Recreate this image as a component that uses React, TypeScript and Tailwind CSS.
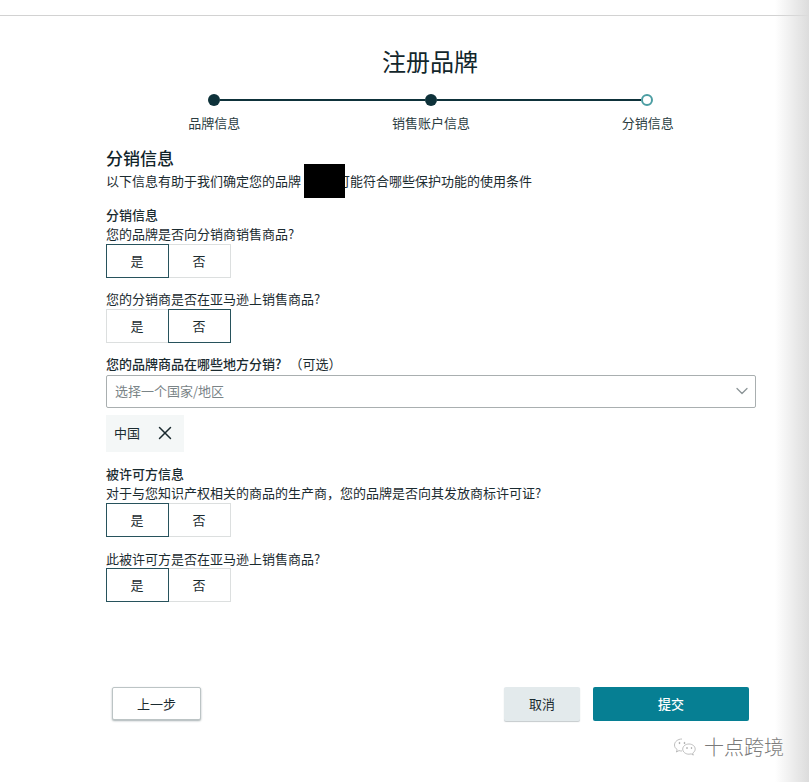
import { ChevronDown, X } from "lucide-react";

const font = { fontFamily: '"Noto Sans CJK SC", "Liberation Sans", sans-serif' };

function Question({ className, bold, children }: { className?: string; bold?: boolean; children: React.ReactNode }) {
  return (
    <p className={`h-[18px] text-[13px] leading-[18px] ${bold ? "font-medium" : ""} ${className ?? ""}`}>{children}</p>
  );
}

function YesNo({ value, className }: { value: "yes" | "no"; className?: string }) {
  const on = "border-[#27525c]";
  const off = "border-[#dcdfdf]";
  return (
    <div className={`flex h-[34px] w-[125px] text-[13px] ${className ?? ""}`}>
      <div className={`flex items-center justify-center border pb-px pr-px ${value === "yes" ? `w-[63px] ${on}` : `w-[62px] border-r-0 ${off}`}`}>是</div>
      <div className={`flex items-center justify-center border pb-px pr-px ${value === "no" ? `w-[63px] ${on}` : `w-[62px] border-l-0 ${off}`}`}>否</div>
    </div>
  );
}

function Stepper() {
  return (
    <div>
      <div className="flex h-3 items-center pl-[102px] pr-[103px]">
        <span className="h-3 w-3 shrink-0 rounded-full bg-[#0e323a]" />
        <span className="h-[2px] flex-1 bg-[#0e323a]" />
        <span className="h-3 w-3 shrink-0 rounded-full bg-[#0e323a]" />
        <span className="h-[2px] flex-1 bg-[#0e323a]" />
        <span className="h-3 w-3 shrink-0 rounded-full border-2 border-[#4c9ea3] bg-white" />
      </div>
      <div className="mt-2 grid grid-cols-3 text-center text-[13px] leading-[18px] text-[#2b3d42]">
        <span>品牌信息</span>
        <span>销售账户信息</span>
        <span>分销信息</span>
      </div>
    </div>
  );
}

function WeChatMark() {
  return (
    <svg viewBox="0 0 24 20" className="h-[20px] w-[24px]" fill="none" stroke="#a3a3a3" strokeWidth="0.7">
      <path d="M9 2C4.8 2 1.5 4.7 1.5 8c0 1.9 1 3.5 2.7 4.6L3.4 15l2.6-1.4c.9.3 1.9.4 3 .4" />
      <path d="M16 7c-3.5 0-6.3 2.3-6.3 5.1s2.8 5.1 6.3 5.1c.8 0 1.5-.1 2.2-.3l2.1 1.2-.6-2c1.5-1 2.5-2.4 2.5-4 0-2.8-2.7-5.1-6.2-5.1z" />
      <circle cx="6.5" cy="6" r=".6" fill="#a3a3a3" />
      <circle cx="11.5" cy="6" r=".6" fill="#a3a3a3" />
      <circle cx="14" cy="11" r=".5" fill="#a3a3a3" />
      <circle cx="18.5" cy="11" r=".5" fill="#a3a3a3" />
    </svg>
  );
}

export default function App() {
  return (
    <div style={font} className="relative h-[782px] w-[809px] overflow-hidden bg-white text-[#1b2b30]">
      {/* top rule */}
      <div className="mt-[15px] h-[1px] bg-[#d2d2d2]" />

      <div className="ml-[106px] w-[650px]">
        <h1 className="mt-[29px] h-8 pr-[2px] text-center text-[24px] leading-8 text-[#12262b]">注册品牌</h1>

        <div className="mt-[17px]">
          <Stepper />
        </div>

        {/* distribution info */}
        <h2 className="mt-[14px] h-6 text-[17px] font-medium leading-6 text-[#10242a]">分销信息</h2>
        <p className="mt-[2px] h-[18px] whitespace-nowrap text-[13px] leading-[18px]">
          以下信息有助于我们确定您的品牌
          <span className="relative inline-block h-[18px] w-[36px] align-top">
            <span className="absolute left-[3px] top-[-8px] h-[34px] w-[41px] bg-black" />
          </span>
          可能符合哪些保护功能的使用条件
        </p>

        <Question bold className="mt-4">分销信息</Question>
        <Question className="mt-px">您的品牌是否向分销商销售商品?</Question>
        <YesNo value="yes" className="mt-px" />

        <Question className="mt-3">您的分销商是否在亚马逊上销售商品?</Question>
        <YesNo value="no" className="mt-px" />

        <Question bold className="mt-3">
          您的品牌商品在哪些地方分销?<span className="ml-2 font-normal">（可选）</span>
        </Question>
        <div className="mt-[2px] flex h-[33px] items-center justify-between rounded-[2px] border border-[#a9afb0] pb-px pl-2 pr-[3px] text-[13px] text-[#7a8487]">
          <span className="-mt-px">选择一个国家/地区</span>
          <ChevronDown className="h-5 w-5 text-[#8b9497]" strokeWidth={1.5} />
        </div>

        <div className="mt-[7px] flex h-[37px] w-[78px] items-center bg-[#f4f7f7] pb-[2px] pl-2 text-[13px]">
          <span>中国</span>
          <X className="ml-[14px] h-[22px] w-[22px] text-[#1b2b30]" strokeWidth={1.6} />
        </div>

        {/* licensee info */}
        <Question bold className="mt-[13px]">被许可方信息</Question>
        <Question className="mt-px">对于与您知识产权相关的商品的生产商，您的品牌是否向其发放商标许可证?</Question>
        <YesNo value="yes" className="mt-px" />

        <Question className="mt-[13px]">此被许可方是否在亚马逊上销售商品?</Question>
        <YesNo value="yes" />

        {/* footer buttons */}
        <div className="mt-[85px] flex items-start pl-[6px] pr-[7px] text-[13px]">
          <button type="button" className="h-[33px] w-[89px] rounded-[2px] border border-[#bcc4c5] bg-white shadow-[0_1px_2px_rgba(60,80,85,0.45)]">
            上一步
          </button>
          <button type="button" className="ml-auto h-[34px] w-[76px] rounded-[2px] bg-[#e3eaec] shadow-[0_1px_1px_rgba(60,80,85,0.3)]">
            取消
          </button>
          <button type="button" className="ml-[13px] h-[34px] w-[156px] rounded-[2px] bg-[#067f93] font-medium text-white">
            提交
          </button>
        </div>
      </div>

      {/* watermark */}
      <div className="absolute left-[673px] top-[736px] flex items-center gap-[7px] text-[20px] font-light leading-[22px] text-[#7a7a7a]">
        <WeChatMark />
        <span>十点跨境</span>
      </div>

      {/* screenshot edge shade */}
      <div className="pointer-events-none absolute inset-y-0 right-0 w-[34px] bg-gradient-to-r from-transparent to-[#dcdcdc]" />
    </div>
  );
}
